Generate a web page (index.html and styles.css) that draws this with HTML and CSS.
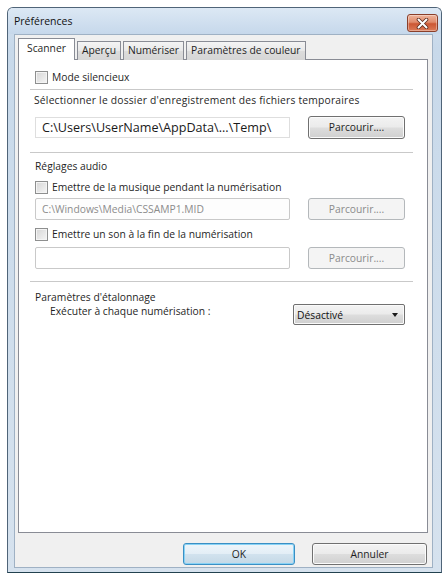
FILE: index.html
```html
<!DOCTYPE html>
<html lang="fr">
<head>
<meta charset="utf-8">
<title>Préférences</title>
<link rel="stylesheet" href="styles.css">
</head>
<body>
<div class="window">
  <div class="titlebar">
    <span class="title">Préférences</span>
    <div class="close">
      <svg width="13" height="11" viewBox="0 0 13 11">
        <path d="M2.5 1.5 L10.5 9.5 M10.5 1.5 L2.5 9.5" stroke="#5a2a1c" stroke-width="3.6" stroke-linecap="round" fill="none"/>
        <path d="M2.5 1.5 L10.5 9.5 M10.5 1.5 L2.5 9.5" stroke="#ffffff" stroke-width="2" stroke-linecap="round" fill="none"/>
      </svg>
    </div>
  </div>
  <div class="client">
    <div class="tabs">
      <div class="tab active">Scanner</div>
      <div class="tab">Aperçu</div>
      <div class="tab">Numériser</div>
      <div class="tab">Paramètres de couleur</div>
    </div>
    <div class="panel">
      <label class="check r1"><span class="box"></span>Mode silencieux</label>
      <div class="sep s1"></div>
      <div class="label l1">Sélectionner le dossier d'enregistrement des fichiers temporaires</div>
      <div class="field-row fr1">
        <div class="pathbox">C:\Users\UserName\AppData\...\Temp\</div>
        <div class="btn">Parcourir....</div>
      </div>
      <div class="sep s2"></div>
      <div class="label l2">Réglages audio</div>
      <label class="check r2"><span class="box"></span>Emettre de la musique pendant la numérisation</label>
      <div class="field-row fr2">
        <div class="edit disabled">C:\Windows\Media\CSSAMP1.MID</div>
        <div class="btn disabled">Parcourir....</div>
      </div>
      <label class="check r3"><span class="box"></span>Emettre un son à la fin de la numérisation</label>
      <div class="field-row fr3">
        <div class="edit"></div>
        <div class="btn disabled">Parcourir....</div>
      </div>
      <div class="sep s3"></div>
      <div class="label l3">Paramètres d'étalonnage</div>
      <div class="calib-row">
        <div class="label indent">Exécuter à chaque numérisation :</div>
        <div class="combo"><span>Désactivé</span><span class="arrow"></span></div>
      </div>
    </div>
    <div class="buttons">
      <div class="btn dlg default">OK</div>
      <div class="btn dlg cancel">Annuler</div>
    </div>
  </div>
</div>
</body>
</html>
```

FILE: styles.css
```css
html, body {
  margin: 0;
  padding: 0;
  background: #ffffff;
}

body {
  font-family: "Open Sans", "Noto Sans", sans-serif;
  font-size: 10.3px;
  color: #1f1f1f;
}

.window {
  margin: 7px 0 0 7px;
  width: 435px;
  height: 566px;
  box-sizing: border-box;
  border: 1px solid #4f6478;
  border-bottom-color: #22424f;
  border-radius: 6px 6px 0 0;
  background: linear-gradient(#d2e0ef, #c8d9ea 40px, #d6e2ee);
  display: flex;
  flex-direction: column;
}

.titlebar {
  height: 26px;
  display: flex;
  align-items: center;
  justify-content: space-between;
  padding: 0 3px 0 6px;
  background: linear-gradient(#dce8f4, #c6d8eb);
  border-radius: 5px 5px 0 0;
}

.title {
  font-size: 10.5px;
  color: #111;
  margin-top: -1px;
}

.close {
  width: 31px;
  height: 18px;
  box-sizing: border-box;
  margin-top: 4px;
  border: 1px solid #8a3f2a;
  border-radius: 3px;
  background: linear-gradient(#eeb49c, #e08b6b 45%, #cc5733 55%, #dc7b57);
  box-shadow: inset 0 0 0 1px rgba(255,255,255,0.35);
  display: flex;
  align-items: center;
  justify-content: center;
}

.client {
  flex: 1;
  margin: 0 8px 4px 6px;
  border: 1px solid #9fb1c4;
  background: #f0f0f0;
  padding: 3px 4px 0 3px;
  display: flex;
  flex-direction: column;
}

.tabs {
  display: flex;
  height: 22px;
  align-items: flex-end;
  position: relative;
  z-index: 1;
}

.tab {
  height: 19px;
  box-sizing: border-box;
  border: 1px solid #898c95;
  border-bottom: none;
  background: linear-gradient(#f4f4f4, #e8e8e8 50%, #dcdcdc 51%, #d6d6d6);
  padding: 0 4px;
  line-height: 17px;
  margin-right: 2px;
  color: #1f1f1f;
  white-space: nowrap;
}

.tab.active {
  height: 22px;
  background: #ffffff;
  line-height: 19px;
  padding: 0 8px;
  margin-right: 2px;
}

.panel {
  margin-top: -1px;
  height: 474px;
  box-sizing: border-box;
  border: 1px solid #898c95;
  background: #ffffff;
  padding: 0 22px 0 16px;
  display: flex;
  flex-direction: column;
}

.check {
  display: flex;
  align-items: center;
  height: 16px;
  line-height: 16px;
  white-space: nowrap;
}

.box {
  width: 13px;
  height: 13px;
  box-sizing: border-box;
  border: 1px solid #8e8f8f;
  background: linear-gradient(135deg, #d6d6d6, #f5f5f5);
  box-shadow: inset 0 0 0 1px #f4f4f4;
  margin-right: 4px;
  flex: none;
}

.r1 { margin-top: 9px; }
.r2 { margin-top: 6px; }
.r3 { margin-top: 6px; }

.sep {
  height: 1px;
  background: #c9c9c9;
  margin-left: -5px;
  margin-right: -8px;
}

.s1 { margin-top: 4px; }
.s2 { margin-top: 13px; }
.s3 { margin-top: 12px; }

.label {
  height: 14px;
  line-height: 14px;
  white-space: nowrap;
}

.l1 { margin-top: 3px; margin-left: -1px; letter-spacing: 0.2px; }
.l2 { margin-top: 6px; }
.l3 { margin-top: 8px; }

.field-row {
  display: flex;
  align-items: center;
  justify-content: space-between;
}

.fr1 { margin-top: 9px; height: 23px; }
.fr2 { margin-top: 3px; height: 22px; }
.fr3 { margin-top: 5px; height: 22px; }

.pathbox {
  width: 255px;
  height: 21px;
  box-sizing: border-box;
  border: 1px solid #dedede;
  font-size: 12.6px;
  line-height: 19px;
  padding-left: 6px;
  color: #1a1a1a;
  white-space: nowrap;
  overflow: hidden;
}

.edit {
  width: 255px;
  height: 22px;
  box-sizing: border-box;
  border: 1px solid #c9c9c9;
  border-radius: 2px;
  line-height: 20px;
  padding-left: 6px;
  white-space: nowrap;
}

.edit.disabled {
  color: #8c8c8c;
  background: #fdfdfd;
}

.btn {
  width: 97px;
  height: 23px;
  box-sizing: border-box;
  border: 1px solid #707070;
  border-radius: 3px;
  background: linear-gradient(#f3f3f3, #ebebeb 48%, #dddddd 52%, #d0d0d0);
  box-shadow: inset 0 0 0 1px #fbfbfb;
  text-align: center;
  line-height: 21px;
  color: #1f1f1f;
}

.btn.disabled {
  height: 22px;
  line-height: 20px;
  border-color: #b4b8bb;
  background: #f4f4f4;
  box-shadow: none;
  color: #8b8b8b;
}

.calib-row {
  display: flex;
  justify-content: space-between;
  align-items: flex-start;
  height: 21px;
}

.indent {
  padding-left: 15px;
}

.combo {
  width: 112px;
  height: 21px;
  box-sizing: border-box;
  border: 1px solid #707070;
  border-radius: 2px;
  background: linear-gradient(#f3f3f3, #ebebeb 48%, #dddddd 52%, #cfcfcf);
  box-shadow: inset 0 0 0 1px #fafafa;
  display: flex;
  align-items: center;
  justify-content: space-between;
  padding: 0 6px 0 3px;
  color: #111;
}

.arrow {
  width: 0;
  height: 0;
  border-left: 3.5px solid transparent;
  border-right: 3.5px solid transparent;
  border-top: 4px solid #1a1a1a;
}

.buttons {
  display: flex;
  justify-content: flex-end;
  gap: 17px;
  margin-top: 10px;
  padding-right: 1px;
}

.btn.dlg {
  height: 22px;
  line-height: 20px;
}

.btn.default {
  width: 112px;
  border-color: #3a8fc4;
  box-shadow: inset 0 0 0 1px #88d2f5;
  background: linear-gradient(#eef5fa, #e3eef6 48%, #d1e2ee 52%, #c4d8e6);
}

.btn.cancel {
  width: 115px;
}
```
